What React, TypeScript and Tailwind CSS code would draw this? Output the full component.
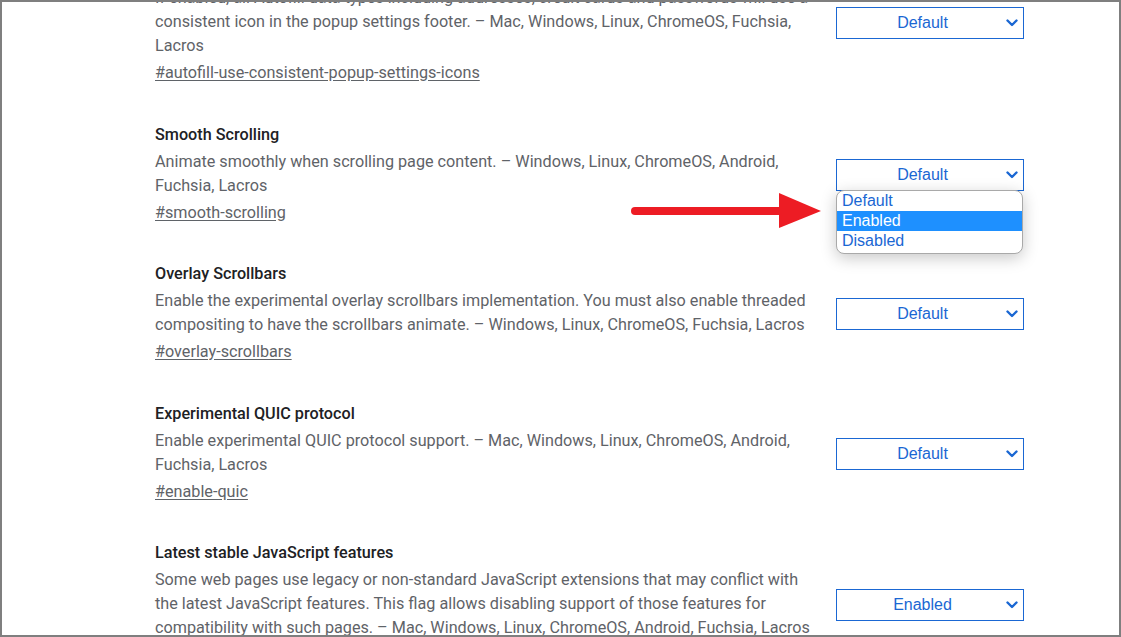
import React from 'react'

// ── Data ──────────────────────────────
type Flag = {
  title: string
  lines: string[]
  link: string
  value: string
  open?: boolean
}

const flags: Flag[] = [
  {
    title: 'Autofill Use Consistent Popup Settings Icons',
    lines: [
      'If enabled, all Autofill data types including addresses, credit cards and passwords will use a',
      'consistent icon in the popup settings footer. – Mac, Windows, Linux, ChromeOS, Fuchsia,',
      'Lacros',
    ],
    link: '#autofill-use-consistent-popup-settings-icons',
    value: 'Default',
  },
  {
    title: 'Smooth Scrolling',
    lines: [
      'Animate smoothly when scrolling page content. – Windows, Linux, ChromeOS, Android,',
      'Fuchsia, Lacros',
    ],
    link: '#smooth-scrolling',
    value: 'Default',
    open: true,
  },
  {
    title: 'Overlay Scrollbars',
    lines: [
      'Enable the experimental overlay scrollbars implementation. You must also enable threaded',
      'compositing to have the scrollbars animate. – Windows, Linux, ChromeOS, Fuchsia, Lacros',
    ],
    link: '#overlay-scrollbars',
    value: 'Default',
  },
  {
    title: 'Experimental QUIC protocol',
    lines: [
      'Enable experimental QUIC protocol support. – Mac, Windows, Linux, ChromeOS, Android,',
      'Fuchsia, Lacros',
    ],
    link: '#enable-quic',
    value: 'Default',
  },
  {
    title: 'Latest stable JavaScript features',
    lines: [
      'Some web pages use legacy or non-standard JavaScript extensions that may conflict with',
      'the latest JavaScript features. This flag allows disabling support of those features for',
      'compatibility with such pages. – Mac, Windows, Linux, ChromeOS, Android, Fuchsia, Lacros',
    ],
    link: '#javascript-harmony',
    value: 'Enabled',
  },
]

// ── Sub-components ────────────────────────
function Chevron() {
  return (
    <svg width="12" height="8" viewBox="0 0 12 8" className="absolute right-[5px] top-1/2 -translate-y-1/2">
      <path d="M1.5 1.5 L6 6 L10.5 1.5" fill="none" stroke="#1a67d3" strokeWidth="2.4" strokeLinecap="round" strokeLinejoin="round" />
    </svg>
  )
}

function FlagSelect({ value, open }: { value: string; open?: boolean }) {
  return (
    <div className="relative w-[188px] h-[32px] shrink-0 border border-[#1a67d3] bg-white flex items-center justify-center pr-[15px] text-[16px] text-[#1a67d3] font-['Liberation_Sans',Arial,sans-serif]">
      {value}
      <Chevron />
      {open && (
        <div className="absolute left-[-1px] top-full w-[187px] h-[64px] bg-white border border-[#a9a9a9] rounded-[8px] shadow-[0_4px_16px_rgba(0,0,0,0.22)] overflow-hidden text-left">
          {['Default', 'Enabled', 'Disabled'].map((opt) => (
            <div
              key={opt}
              className={
                opt === 'Enabled'
                  ? 'h-[20px] leading-[20px] pl-[5px] bg-[#1e90ff] text-white'
                  : 'h-[20px] leading-[20px] pl-[5px] text-[#1a67d3]'
              }
            >
              {opt}
            </div>
          ))}
        </div>
      )}
    </div>
  )
}

function FlagRow({ flag }: { flag: Flag }) {
  return (
    <div className="flex items-center">
      <div className="w-[665px] shrink-0">
        <div className="text-[16.2px] leading-5 font-medium text-[#202124] whitespace-nowrap">{flag.title}</div>
        <div className="mt-[5px] text-[16.2px] leading-6 text-[#5f6368] whitespace-nowrap">
          {flag.lines.map((l, i) => (
            <div key={i}>{l}</div>
          ))}
        </div>
        <div className="mt-[3px] text-[16.2px] leading-6 text-[#5f6368] underline underline-offset-2">{flag.link}</div>
      </div>
      <div className="ml-[16px]">
        <FlagSelect value={flag.value} open={flag.open} />
      </div>
    </div>
  )
}

// ── Page ──────────────────────────────────
export default function App() {
  return (
    <div className="relative w-[1121px] h-[637px] overflow-hidden bg-white border-2 border-[#7f7f7f] font-['Roboto',sans-serif]">
      <div className="pl-[153px] mt-[-41px] flex flex-col gap-[39.5px]">
        {flags.map((f) => (
          <FlagRow key={f.link} flag={f} />
        ))}
      </div>

      {/* Red arrow annotation */}
      <svg className="absolute left-[628px] top-[189px]" width="195" height="40" viewBox="0 0 195 40">
        <line x1="5" y1="20" x2="152" y2="20" stroke="#ed1c24" strokeWidth="8" strokeLinecap="round" />
        <polygon points="149,2 191,20 149,37" fill="#ed1c24" />
      </svg>
    </div>
  )
}
